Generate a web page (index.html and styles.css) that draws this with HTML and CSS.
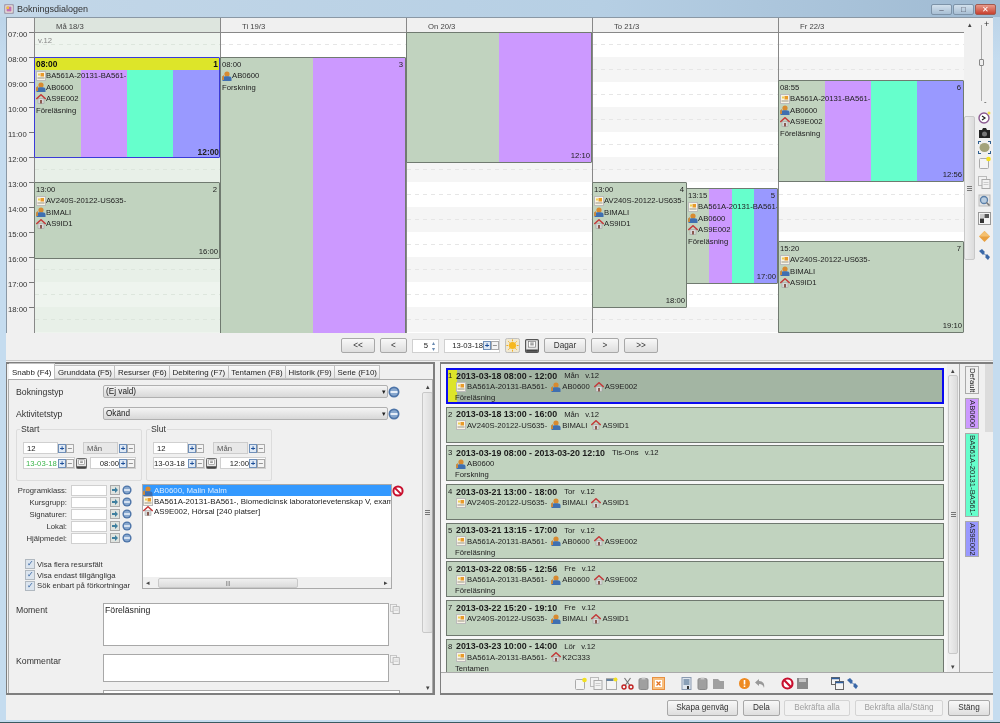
FILE: index.html
```html
<!DOCTYPE html>
<html lang="sv">
<head>
  <meta charset="UTF-8">
  <title>Bokningsdialogen</title>
  <link rel="stylesheet" href="styles.css">
</head>
<body>
<svg class="defs" width="0" height="0">
  <symbol id="i-course" viewBox="0 0 10 10"><rect x=".5" y=".5" width="9" height="9" fill="#f7f3e6" stroke="#bbb"/><rect x="1.5" y="6" width="7" height="2" fill="#c9c4b4"/><rect x="4.5" y="2" width="3.5" height="3.5" fill="#e89a2a"/><rect x="2" y="2.5" width="2" height="2" fill="#f0d050"/></symbol>
  <symbol id="i-person" viewBox="0 0 10 10"><circle cx="5" cy="3" r="2.6" fill="#d88a30"/><path d="M.5 10V7.500C.5 6 2 5.200 3.500 5.200h3C8.200 5.200 9.500 6 9.500 7.500V10z" fill="#3f6fb0"/><path d="M0 5.500 2 4v5H0z" fill="#c98a40"/></symbol>
  <symbol id="i-house" viewBox="0 0 10 10"><rect x="2" y="4.500" width="6" height="5" fill="#d8d8d8" stroke="#999" stroke-width=".5"/><path d="M.3 5 5 .7 9.700 5" fill="none" stroke="#c4393a" stroke-width="1.400"/><rect x="4" y="6" width="2" height="3.500" fill="#8a5a50"/></symbol>
  <symbol id="i-round" viewBox="0 0 12 12"><circle cx="6" cy="6" r="5.500" fill="#4d74a8"/><circle cx="6" cy="6" r="3.800" fill="#88a8cf"/><path d="M2.500 5h7v2h-7z" fill="#e6eef8"/></symbol>
  <symbol id="i-pick" viewBox="0 0 10 10"><rect x=".5" y=".5" width="9" height="9" fill="#dfe3df" stroke="#aaa"/><path d="M2 4h3V2l3 3-3 3V6H2z" fill="#3f7f9f"/></symbol>
  <symbol id="i-no" viewBox="0 0 12 12"><circle cx="6" cy="6" r="4.600" fill="#fff" stroke="#c8102e" stroke-width="2"/><path d="M2.600 2.600l6.800 6.800" stroke="#c8102e" stroke-width="2"/></symbol>
  <symbol id="i-cal" viewBox="0 0 12 12"><rect x=".5" y=".5" width="11" height="11" rx="1" fill="#e8e8e8" stroke="#555"/><rect x="3" y="2" width="6" height="5" fill="#fff" stroke="#777" stroke-width=".6"/><path d="M1 9h10v2H1z" fill="#444"/><path d="M4.500 3.500h3M4.500 5h3" stroke="#555" stroke-width=".7"/></symbol>
  <symbol id="i-sun" viewBox="0 0 16 16"><rect x=".5" y=".5" width="15" height="15" rx="2" fill="#f0e8d0" stroke="#bbb"/><circle cx="8" cy="8" r="3.800" fill="#f6b820"/><path d="M8 1.500v2M8 12.500v2M1.500 8h2M12.500 8h2M3.500 3.500l1.400 1.400M11 11l1.400 1.400M3.500 12.500 5 11M11 5l1.400-1.400" stroke="#f0a818"/></symbol>
  <symbol id="i-clock" viewBox="0 0 13 13"><circle cx="6" cy="7" r="5" fill="#fff" stroke="#8a5a90" stroke-width="1.400"/><path d="M4 5l3 2-3 2" fill="none" stroke="#222" stroke-width="1.200"/><circle cx="11" cy="2" r="1.500" fill="#f0e050"/></symbol>
  <symbol id="i-camera" viewBox="0 0 13 13"><path d="M1 4h3l1-2h3l1 2h3v8H1z" fill="#222"/><circle cx="6.500" cy="8" r="2.500" fill="#777"/></symbol>
  <symbol id="i-frame" viewBox="0 0 13 13"><ellipse cx="6.500" cy="6.500" rx="5" ry="4.500" fill="#a3a27a"/><path d="M0 0h3v1H1v2H0zM13 0h-3v1h2v2h1zM0 13h3v-1H1v-2H0zM13 13h-3v-1h2v-2h1z" fill="#2f5f8f"/></symbol>
  <symbol id="i-new" viewBox="0 0 13 13"><rect x="1.500" y="2.500" width="9" height="10" rx="1" fill="#f4f4f4" stroke="#aaa"/><circle cx="10.500" cy="3" r="2.300" fill="#f2e020"/></symbol>
  <symbol id="i-copy" viewBox="0 0 13 13"><rect x=".5" y=".5" width="8" height="9" fill="#f2f2f2" stroke="#bbb"/><rect x="4" y="3.500" width="8" height="9" fill="#f2f2f2" stroke="#aaa"/><path d="M5.500 6.500h5M5.500 8.500h5" stroke="#ccc"/></symbol>
  <symbol id="i-search" viewBox="0 0 13 13"><rect x="1" y="1" width="11" height="11" fill="#e4e4e4" stroke="#bbb"/><circle cx="6" cy="6" r="3.500" fill="#b8cce0" stroke="#5a7fa8" stroke-width="1.300"/><path d="M8.500 8.500l3 3" stroke="#777" stroke-width="1.500"/></symbol>
  <symbol id="i-squares" viewBox="0 0 13 13"><rect x=".5" y=".5" width="12" height="12" fill="#f4f4f4" stroke="#999"/><rect x="2" y="6.500" width="4" height="4.500" fill="#333"/><rect x="6.500" y="2" width="4.500" height="4" fill="#555"/><rect x="2" y="2" width="4" height="4" fill="#ccc"/></symbol>
  <symbol id="i-diamond" viewBox="0 0 13 13"><path d="M6.500 1 12 6.500 6.500 12 1 6.500z" fill="#e8a040"/><path d="M6.500 1 12 6.500H1z" fill="#f4c070"/></symbol>
  <symbol id="i-links" viewBox="0 0 13 13"><path d="M1 3l3-2 3 3-1 1 2 2 1-1 3 3-2 3-3-3 1-1-2-2-1 1z" fill="#3a68a8"/></symbol>
  <symbol id="i-note" viewBox="0 0 13 13"><rect x="1.500" y="1.500" width="10" height="11" fill="#f4f4f4" stroke="#aaa"/><path d="M1.500 3h7" stroke="#34587f" stroke-width="1.500"/><circle cx="10.500" cy="2.500" r="2" fill="#f2e020"/></symbol>
  <symbol id="i-cut" viewBox="0 0 13 13"><path d="M3.500 1l5 7M9.500 1l-5 7" stroke="#777" stroke-width="1.200"/><circle cx="3" cy="10" r="2" fill="none" stroke="#c02020" stroke-width="1.400"/><circle cx="10" cy="10" r="2" fill="none" stroke="#c02020" stroke-width="1.400"/></symbol>
  <symbol id="i-clip" viewBox="0 0 13 13"><rect x="2" y="1.500" width="9" height="11" rx="1.500" fill="#a0a0a0" stroke="#8a8a8a"/><rect x="4.500" y=".5" width="4" height="2" fill="#c8c8c8"/></symbol>
  <symbol id="i-del" viewBox="0 0 13 13"><rect x=".5" y=".5" width="12" height="12" fill="#f8c080" stroke="#e89040"/><rect x="3" y="3" width="7" height="7" fill="#fff"/><path d="M4.500 4.500l4 4M8.500 4.500l-4 4" stroke="#e07020" stroke-width="1.300"/></symbol>
  <symbol id="i-list" viewBox="0 0 13 13"><rect x="2" y=".5" width="9" height="12" fill="#dfe6ee" stroke="#8a9ab0"/><path d="M3.500 3h6M3.500 5h6M3.500 7h6" stroke="#34587f"/><path d="M7 9h2v3H7z" fill="#333"/></symbol>
  <symbol id="i-folder" viewBox="0 0 13 13"><path d="M1 2h5l2 2h4v8H1z" fill="#a0a0a0"/></symbol>
  <symbol id="i-warn" viewBox="0 0 13 13"><circle cx="6.500" cy="6.500" r="5.500" fill="#ee8a20"/><path d="M5.700 3h1.600v4.500H5.700zM5.700 8.500h1.600V10H5.700z" fill="#fff"/></symbol>
  <symbol id="i-undo" viewBox="0 0 13 13"><path d="M5 2 1 5.500 5 9V7c3 0 4 1 5 4 1-4-1-7-5-7z" fill="#999"/></symbol>
  <symbol id="i-save" viewBox="0 0 13 13"><rect x="1" y="1" width="11" height="11" fill="#8a8a8a"/><rect x="3" y="1.500" width="7" height="3.500" fill="#c8c8c8"/></symbol>
  <symbol id="i-windows" viewBox="0 0 13 13"><rect x=".5" y=".5" width="8" height="7" fill="#f4f4f4" stroke="#666"/><path d="M.5 1.500h8" stroke="#2f5f9f" stroke-width="1.500"/><rect x="4.500" y="4.500" width="8" height="8" fill="#f4f4f4" stroke="#666"/><path d="M4.500 5.500h8" stroke="#2f5f9f" stroke-width="1.500"/></symbol>
  <symbol id="i-app" viewBox="0 0 12 12"><rect x="1" y="1" width="10" height="10" fill="#f0ece0" stroke="#8a7a90"/><rect x="3" y="3" width="6" height="6" fill="#c070b0"/><rect x="3" y="3" width="3" height="3" fill="#f0c040"/></symbol>
</svg>

<div class="window">
  <div class="titlebar">
    <svg class="ico app-ico"><use href="#i-app"/></svg>
    <span class="title">Bokningsdialogen</span>
    <div class="winbuttons">
      <span class="winbtn">&#8211;</span>
      <span class="winbtn">&#9633;</span>
      <span class="winbtn close">&#10005;</span>
    </div>
  </div>

  <div class="client">
    <section class="calendar">
      <div class="gutter">
        <div class="hour">07:00</div>
        <div class="hour">08:00</div>
        <div class="hour">09:00</div>
        <div class="hour">10:00</div>
        <div class="hour">11:00</div>
        <div class="hour">12:00</div>
        <div class="hour">13:00</div>
        <div class="hour">14:00</div>
        <div class="hour">15:00</div>
        <div class="hour">16:00</div>
        <div class="hour">17:00</div>
        <div class="hour">18:00</div>
      </div>

      <div class="day today">
        <div class="day-head">Må 18/3</div>
        <div class="day-body">
          <span class="week-no">v.12</span>
          <div class="event strip4 selected ev-mon1">
            <div class="ev-head"><span>08:00</span><span>1</span></div>
            <div class="ev-row"><svg class="ico"><use href="#i-course"/></svg>BA561A-20131-BA561-</div>
            <div class="ev-row"><svg class="ico"><use href="#i-person"/></svg>AB0600</div>
            <div class="ev-row"><svg class="ico"><use href="#i-house"/></svg>AS9E002</div>
            <div class="ev-row">Föreläsning</div>
            <div class="ev-end">12:00</div>
          </div>
          <div class="event ev-mon2">
            <div class="ev-head"><span>13:00</span><span>2</span></div>
            <div class="ev-row"><svg class="ico"><use href="#i-course"/></svg>AV240S-20122-US635-</div>
            <div class="ev-row"><svg class="ico"><use href="#i-person"/></svg>BIMALI</div>
            <div class="ev-row"><svg class="ico"><use href="#i-house"/></svg>AS9ID1</div>
            <div class="ev-end">16:00</div>
          </div>
        </div>
      </div>

      <div class="day">
        <div class="day-head">Ti 19/3</div>
        <div class="day-body">
          <div class="event strip2 ev-tue">
            <div class="ev-head"><span>08:00</span><span>3</span></div>
            <div class="ev-row"><svg class="ico"><use href="#i-person"/></svg>AB0600</div>
            <div class="ev-row">Forskning</div>
          </div>
        </div>
      </div>

      <div class="day">
        <div class="day-head">On 20/3</div>
        <div class="day-body">
          <div class="event strip2 ev-wed">
            <div class="ev-end">12:10</div>
          </div>
        </div>
      </div>

      <div class="day">
        <div class="day-head">To 21/3</div>
        <div class="day-body">
          <div class="event ev-thu1">
            <div class="ev-head"><span>13:00</span><span>4</span></div>
            <div class="ev-row"><svg class="ico"><use href="#i-course"/></svg>AV240S-20122-US635-</div>
            <div class="ev-row"><svg class="ico"><use href="#i-person"/></svg>BIMALI</div>
            <div class="ev-row"><svg class="ico"><use href="#i-house"/></svg>AS9ID1</div>
            <div class="ev-end">18:00</div>
          </div>
          <div class="event strip4 ev-thu2">
            <div class="ev-head"><span>13:15</span><span>5</span></div>
            <div class="ev-row"><svg class="ico"><use href="#i-course"/></svg>BA561A-20131-BA561-</div>
            <div class="ev-row"><svg class="ico"><use href="#i-person"/></svg>AB0600</div>
            <div class="ev-row"><svg class="ico"><use href="#i-house"/></svg>AS9E002</div>
            <div class="ev-row">Föreläsning</div>
            <div class="ev-end">17:00</div>
          </div>
        </div>
      </div>

      <div class="day">
        <div class="day-head">Fr 22/3</div>
        <div class="day-body">
          <div class="event strip4 ev-fri1">
            <div class="ev-head"><span>08:55</span><span>6</span></div>
            <div class="ev-row"><svg class="ico"><use href="#i-course"/></svg>BA561A-20131-BA561-</div>
            <div class="ev-row"><svg class="ico"><use href="#i-person"/></svg>AB0600</div>
            <div class="ev-row"><svg class="ico"><use href="#i-house"/></svg>AS9E002</div>
            <div class="ev-row">Föreläsning</div>
            <div class="ev-end">12:56</div>
          </div>
          <div class="event ev-fri2">
            <div class="ev-head"><span>15:20</span><span>7</span></div>
            <div class="ev-row"><svg class="ico"><use href="#i-course"/></svg>AV240S-20122-US635-</div>
            <div class="ev-row"><svg class="ico"><use href="#i-person"/></svg>BIMALI</div>
            <div class="ev-row"><svg class="ico"><use href="#i-house"/></svg>AS9ID1</div>
            <div class="ev-end">19:10</div>
          </div>
        </div>
      </div>

      <div class="vscroll cal-scroll">
        <span class="arrow">&#9652;</span>
        <div class="thumb"><span class="grip"></span></div>
      </div>

      <div class="tools">
        <div class="slider">
          <span class="slider-plus">+</span>
          <span class="slider-knob"></span>
          <span class="slider-minus">-</span>
        </div>
        <div class="tool-group">
          <svg class="tool"><use href="#i-clock"/></svg>
          <svg class="tool"><use href="#i-camera"/></svg>
          <svg class="tool"><use href="#i-frame"/></svg>
          <svg class="tool"><use href="#i-new"/></svg>
        </div>
        <div class="tool-group wide">
          <svg class="tool"><use href="#i-copy"/></svg>
          <svg class="tool"><use href="#i-search"/></svg>
          <svg class="tool"><use href="#i-squares"/></svg>
          <svg class="tool"><use href="#i-diamond"/></svg>
          <svg class="tool"><use href="#i-links"/></svg>
        </div>
      </div>
    </section>

    <nav class="navbar">
      <button class="btn w-34">&lt;&lt;</button>
      <button class="btn w-27">&lt;</button>
      <span class="field spin"><span>5</span><span class="spin-arrows"><i>&#9652;</i><i>&#9662;</i></span></span>
      <span class="field nav-date"><span class="grow right">13-03-18</span><span class="pm"><i class="plus">+</i><i>&#8722;</i></span></span>
      <svg class="nav-ico"><use href="#i-sun"/></svg>
      <svg class="nav-cal"><use href="#i-cal"/></svg>
      <button class="btn w-42">Dagar</button>
      <button class="btn w-28">&gt;</button>
      <button class="btn w-34">&gt;&gt;</button>
    </nav>

    <div class="lower">
      <section class="left-pane">
        <div class="tabs">
          <span class="tab active">Snabb (F4)</span>
          <span class="tab">Grunddata (F5)</span>
          <span class="tab">Resurser (F6)</span>
          <span class="tab">Debitering (F7)</span>
          <span class="tab">Tentamen (F8)</span>
          <span class="tab">Historik (F9)</span>
          <span class="tab">Serie (F10)</span>
        </div>
        <div class="tab-body">
          <div class="form">
            <div class="form-row">
              <label class="form-label">Bokningstyp</label>
              <span class="select">(Ej vald)<i>&#9662;</i></span>
              <svg class="ico-12"><use href="#i-round"/></svg>
            </div>
            <div class="form-row">
              <label class="form-label">Aktivitetstyp</label>
              <span class="select">Okänd<i>&#9662;</i></span>
              <svg class="ico-12"><use href="#i-round"/></svg>
            </div>

            <div class="periods">
              <fieldset class="period">
                <legend>Start</legend>
                <div class="period-row">
                  <span class="field w-34f">12</span>
                  <span class="pm"><i class="plus">+</i><i>&#8722;</i></span>
                  <span class="field off">Mån</span>
                  <span class="pm"><i class="plus">+</i><i>&#8722;</i></span>
                </div>
                <div class="period-row">
                  <span class="field date-f"><span class="grow green">13-03-18</span><span class="pm"><i class="plus">+</i><i>&#8722;</i></span></span>
                  <svg class="cal-ico"><use href="#i-cal"/></svg>
                  <span class="field time-f"><span class="grow right">08:00</span><span class="pm"><i class="plus">+</i><i>&#8722;</i></span></span>
                </div>
              </fieldset>
              <fieldset class="period">
                <legend>Slut</legend>
                <div class="period-row">
                  <span class="field w-34f">12</span>
                  <span class="pm"><i class="plus">+</i><i>&#8722;</i></span>
                  <span class="field off">Mån</span>
                  <span class="pm"><i class="plus">+</i><i>&#8722;</i></span>
                </div>
                <div class="period-row">
                  <span class="field date-f"><span class="grow">13-03-18</span><span class="pm"><i class="plus">+</i><i>&#8722;</i></span></span>
                  <svg class="cal-ico"><use href="#i-cal"/></svg>
                  <span class="field time-f"><span class="grow right">12:00</span><span class="pm"><i class="plus">+</i><i>&#8722;</i></span></span>
                </div>
              </fieldset>
            </div>

            <div class="resources">
              <div class="res-left">
                <div class="res-row"><label>Programklass:</label><span class="field res-input"></span><svg class="ico-10"><use href="#i-pick"/></svg><svg class="ico-10"><use href="#i-round"/></svg></div>
                <div class="res-row"><label>Kursgrupp:</label><span class="field res-input"></span><svg class="ico-10"><use href="#i-pick"/></svg><svg class="ico-10"><use href="#i-round"/></svg></div>
                <div class="res-row"><label>Signaturer:</label><span class="field res-input"></span><svg class="ico-10"><use href="#i-pick"/></svg><svg class="ico-10"><use href="#i-round"/></svg></div>
                <div class="res-row"><label>Lokal:</label><span class="field res-input"></span><svg class="ico-10"><use href="#i-pick"/></svg><svg class="ico-10"><use href="#i-round"/></svg></div>
                <div class="res-row"><label>Hjälpmedel:</label><span class="field res-input"></span><svg class="ico-10"><use href="#i-pick"/></svg><svg class="ico-10"><use href="#i-round"/></svg></div>
                <div class="checks">
                  <div class="check"><span class="box">&#10003;</span>Visa flera resursfält</div>
                  <div class="check"><span class="box">&#10003;</span>Visa endast tillgängliga</div>
                  <div class="check"><span class="box">&#10003;</span>Sök enbart på förkortningar</div>
                </div>
              </div>
              <div class="res-list">
                <div class="res-items">
                  <div class="res-item sel"><svg class="ico"><use href="#i-person"/></svg>AB0600, Malin Malm</div>
                  <div class="res-item"><svg class="ico"><use href="#i-course"/></svg>BA561A-20131-BA561-, Biomedicinsk laboratorievetenskap V, examen</div>
                  <div class="res-item"><svg class="ico"><use href="#i-house"/></svg>AS9E002, Hörsal [240 platser]</div>
                </div>
                <div class="hscroll"><span class="arrow">&#9666;</span><span class="hthumb">|||</span><span class="arrow end">&#9656;</span></div>
              </div>
              <svg class="ico-12 no-ico"><use href="#i-no"/></svg>
            </div>

            <div class="form-row text-row moment-row">
              <label class="form-label">Moment</label>
              <div class="textarea moment">Föreläsning</div>
              <svg class="ico-10 doc"><use href="#i-copy"/></svg>
            </div>
            <div class="form-row text-row comment-row">
              <label class="form-label">Kommentar</label>
              <div class="textarea comment"></div>
              <svg class="ico-10 doc"><use href="#i-copy"/></svg>
            </div>
            <div class="form-row text-row last-row">
              <span class="form-label"></span>
              <div class="textarea last"></div>
            </div>
          </div>
          <div class="vscroll form-scroll">
            <span class="arrow">&#9652;</span>
            <div class="thumb"><span class="grip"></span></div>
            <span class="arrow end">&#9662;</span>
          </div>
        </div>
      </section>

      <section class="right-pane">
        <div class="booking-area">
          <div class="bookings">
            <div class="booking selected">
              <div class="b-line"><span class="b-no">1</span><b>2013-03-18 08:00 - 12:00</b><span class="b-day">Mån</span><span>v.12</span></div>
              <div class="b-line sub"><svg class="ico"><use href="#i-course"/></svg>BA561A-20131-BA561-<svg class="ico"><use href="#i-person"/></svg>AB0600<svg class="ico"><use href="#i-house"/></svg>AS9E002</div>
              <div class="b-line note">Föreläsning</div>
            </div>
            <div class="booking">
              <div class="b-line"><span class="b-no">2</span><b>2013-03-18 13:00 - 16:00</b><span class="b-day">Mån</span><span>v.12</span></div>
              <div class="b-line sub"><svg class="ico"><use href="#i-course"/></svg>AV240S-20122-US635-<svg class="ico"><use href="#i-person"/></svg>BIMALI<svg class="ico"><use href="#i-house"/></svg>AS9ID1</div>
            </div>
            <div class="booking">
              <div class="b-line"><span class="b-no">3</span><b>2013-03-19 08:00 - 2013-03-20 12:10</b><span class="b-day">Tis-Ons</span><span>v.12</span></div>
              <div class="b-line sub"><svg class="ico"><use href="#i-person"/></svg>AB0600</div>
              <div class="b-line note">Forskning</div>
            </div>
            <div class="booking">
              <div class="b-line"><span class="b-no">4</span><b>2013-03-21 13:00 - 18:00</b><span class="b-day">Tor</span><span>v.12</span></div>
              <div class="b-line sub"><svg class="ico"><use href="#i-course"/></svg>AV240S-20122-US635-<svg class="ico"><use href="#i-person"/></svg>BIMALI<svg class="ico"><use href="#i-house"/></svg>AS9ID1</div>
            </div>
            <div class="booking">
              <div class="b-line"><span class="b-no">5</span><b>2013-03-21 13:15 - 17:00</b><span class="b-day">Tor</span><span>v.12</span></div>
              <div class="b-line sub"><svg class="ico"><use href="#i-course"/></svg>BA561A-20131-BA561-<svg class="ico"><use href="#i-person"/></svg>AB0600<svg class="ico"><use href="#i-house"/></svg>AS9E002</div>
              <div class="b-line note">Föreläsning</div>
            </div>
            <div class="booking">
              <div class="b-line"><span class="b-no">6</span><b>2013-03-22 08:55 - 12:56</b><span class="b-day">Fre</span><span>v.12</span></div>
              <div class="b-line sub"><svg class="ico"><use href="#i-course"/></svg>BA561A-20131-BA561-<svg class="ico"><use href="#i-person"/></svg>AB0600<svg class="ico"><use href="#i-house"/></svg>AS9E002</div>
              <div class="b-line note">Föreläsning</div>
            </div>
            <div class="booking">
              <div class="b-line"><span class="b-no">7</span><b>2013-03-22 15:20 - 19:10</b><span class="b-day">Fre</span><span>v.12</span></div>
              <div class="b-line sub"><svg class="ico"><use href="#i-course"/></svg>AV240S-20122-US635-<svg class="ico"><use href="#i-person"/></svg>BIMALI<svg class="ico"><use href="#i-house"/></svg>AS9ID1</div>
            </div>
            <div class="booking">
              <div class="b-line"><span class="b-no">8</span><b>2013-03-23 10:00 - 14:00</b><span class="b-day">Lör</span><span>v.12</span></div>
              <div class="b-line sub"><svg class="ico"><use href="#i-course"/></svg>BA561A-20131-BA561-<svg class="ico"><use href="#i-house"/></svg>K2C333</div>
              <div class="b-line note">Tentamen</div>
            </div>
          </div>
          <div class="vscroll list-scroll">
            <span class="arrow">&#9652;</span>
            <div class="thumb"><span class="grip"></span></div>
            <span class="arrow end">&#9662;</span>
          </div>
          <aside class="legend-side">
            <div class="legend-tabs">
              <span class="ltab">Default</span>
              <span class="ltab purple">AB0600</span>
              <span class="ltab teal">BA561A-20131-BA561-</span>
              <span class="ltab blue">AS9E002</span>
            </div>
            <span class="legend-scroll"></span>
          </aside>
        </div>
        <div class="toolbar">
          <div class="tb-group">
            <svg class="tb"><use href="#i-new"/></svg>
            <svg class="tb"><use href="#i-copy"/></svg>
            <svg class="tb"><use href="#i-note"/></svg>
            <svg class="tb"><use href="#i-cut"/></svg>
            <svg class="tb"><use href="#i-clip"/></svg>
            <svg class="tb"><use href="#i-del"/></svg>
          </div>
          <div class="tb-group">
            <svg class="tb"><use href="#i-list"/></svg>
            <svg class="tb"><use href="#i-clip"/></svg>
            <svg class="tb"><use href="#i-folder"/></svg>
          </div>
          <div class="tb-group">
            <svg class="tb"><use href="#i-warn"/></svg>
            <svg class="tb"><use href="#i-undo"/></svg>
          </div>
          <div class="tb-group">
            <svg class="tb"><use href="#i-no"/></svg>
            <svg class="tb"><use href="#i-save"/></svg>
          </div>
          <div class="tb-group far">
            <svg class="tb"><use href="#i-windows"/></svg>
            <svg class="tb"><use href="#i-links"/></svg>
          </div>
        </div>
      </section>
    </div>

    <footer class="footer">
      <button class="btn foot w-71">Skapa genväg</button>
      <button class="btn foot w-37">Dela</button>
      <button class="btn foot w-66 disabled">Bekräfta alla</button>
      <button class="btn foot w-88 disabled">Bekräfta alla/Stäng</button>
      <button class="btn foot w-42">Stäng</button>
    </footer>
  </div>
</div>
</body>
</html>
```

FILE: styles.css
```css
* {
  box-sizing: border-box;
}

body {
  margin: 0;
  font-family: "Liberation Sans", Arial, sans-serif;
  font-size: 7.7px;
  color: #222;
  background: #c4dbee;
}

.defs {
  position: absolute;
}

.window {
  width: 1000px;
  height: 723px;
  display: flex;
  flex-direction: column;
  overflow: hidden;
  filter: blur(0.4px);
  background: linear-gradient(#b9d1e6, #c5dcef 60px);
  border-bottom: 1px solid #3a5a60;
}

/* title bar */
.titlebar {
  height: 17px;
  flex: none;
  display: flex;
  align-items: center;
  padding: 0 4px;
  background: linear-gradient(90deg, #c3d7e8, #b6cfe4 60%, #9fbad2);
}

.app-ico {
  margin-right: 3px;
}

.title {
  font-size: 9px;
  color: #333;
}

.winbuttons {
  margin-left: auto;
  display: flex;
  gap: 1px;
  align-self: flex-start;
  margin-top: 4px;
}

.winbtn {
  width: 21px;
  height: 11px;
  line-height: 10px;
  text-align: center;
  font-size: 8px;
  color: #445;
  border: 1px solid #7d93a8;
  border-radius: 2px;
  background: linear-gradient(#d2e0ec, #a8bfd4);
}

.winbtn.close {
  color: #fff;
  background: linear-gradient(#e89a8a, #c8402f);
  border-color: #a05a50;
}

.client {
  flex: 1;
  margin: 0 7px 2px 6px;
  display: flex;
  flex-direction: column;
  min-height: 0;
  background: #f0f0f0;
}

/* calendar */
.calendar {
  height: 316px;
  flex: none;
  display: flex;
  border-top: 1px solid #8a98a5;
  overflow: hidden;
}

.gutter {
  width: 28px;
  flex: none;
  padding-top: 14px;
  border-left: 1px solid #8a98a5;
  background: #f0f0f0;
}

.hour {
  height: 25px;
  display: flex;
  justify-content: space-between;
  padding-left: 1px;
  line-height: 6px;
  color: #333;
}

.hour::after {
  content: "";
  width: 5px;
  height: 1px;
  background: #777;
}

.day {
  width: 186px;
  flex: none;
  display: flex;
  flex-direction: column;
  border-left: 1px solid #888;
}

.day-head {
  height: 15px;
  flex: none;
  padding: 4px 0 0 21px;
  color: #444;
  background: #f0f0f0;
  border-bottom: 1px solid #888;
}

.today .day-head {
  background: #dde5de;
}

.day-body {
  flex: 1;
  position: relative;
  background: linear-gradient(#fff 50%, #f5f5f5 50%) 0 -1px / 100% 50px;
}

/* half hour dashes */
.day-body::before {
  content: "";
  position: absolute;
  top: 0;
  right: 0;
  bottom: 0;
  left: 0;
  background: repeating-linear-gradient(90deg, #e6e6e6 0 4px, transparent 4px 8px);
  -webkit-mask-image: repeating-linear-gradient(transparent 0 11px, #000 11px 12px, transparent 12px 25px);
  mask-image: repeating-linear-gradient(transparent 0 11px, #000 11px 12px, transparent 12px 25px);
}

.today .day-body {
  background-image: linear-gradient(#eef4ee 50%, #e8f0e8 50%);
}

.today .day-body::before {
  background: repeating-linear-gradient(90deg, #dde6dd 0 4px, transparent 4px 8px);
}

.week-no {
  display: block;
  position: relative;
  padding: 3px 0 0 3px;
  color: #888;
}

/* events sit on the time grid */
.event {
  position: absolute;
  display: flex;
  flex-direction: column;
  left: -1px;
  right: 0;
  overflow: hidden;
  background: #c1d3bf;
  border: 1px solid #707a70;
  border-radius: 1px;
}

.strip4 {
  background: linear-gradient(90deg, #c1d3bf 25%, #cc99ff 25% 50%, #66ffcc 50% 75%, #9999ff 75%);
}

.strip2 {
  background: linear-gradient(90deg, #c1d3bf 50%, #cc99ff 50%);
}

.event.selected {
  border-color: #3a3ad8;
}

.ev-mon1 { top: 24px; height: 101px; }
.ev-mon2 { top: 149px; height: 77px; }
.ev-tue { top: 24px; height: 290px; }
.ev-wed { top: -1px; height: 131px; }
.ev-thu1 { top: 149px; height: 126px; right: auto; width: 95px; }
.ev-thu2 { top: 155px; height: 96px; left: 93px; }
.ev-fri1 { top: 47px; height: 102px; }
.ev-fri2 { top: 208px; height: 92px; }

.ev-head {
  height: 12px;
  flex: none;
  display: flex;
  justify-content: space-between;
  align-items: center;
  padding: 0 2px 0 1px;
}

.selected .ev-head {
  background: #dde529;
  font-weight: bold;
  font-size: 8.4px;
  color: #111;
  padding-right: 1px;
}

.ev-row {
  height: 11.6px;
  flex: none;
  display: flex;
  align-items: center;
  white-space: nowrap;
  padding-left: 1px;
}

.ico {
  width: 10px;
  height: 10px;
  flex: none;
}

.ev-end {
  margin-top: auto;
  padding: 0 1px 1px 0;
  text-align: right;
  line-height: 10px;
}

.selected .ev-end {
  font-weight: bold;
  font-size: 8.4px;
  padding: 0;
}

/* scrollbars */
.vscroll {
  flex: none;
  display: flex;
  flex-direction: column;
  align-items: center;
  background: #f0f0f0;
}

.arrow {
  font-size: 7px;
  line-height: 9px;
  color: #444;
  flex: none;
}

.vscroll .arrow.end {
  margin-top: auto;
}

.thumb {
  width: 100%;
  display: flex;
  align-items: center;
  justify-content: center;
  background: linear-gradient(90deg, #eee, #dcdcdc);
  border: 1px solid #c8c8c8;
  border-radius: 2px;
}

.grip {
  width: 5px;
  height: 5px;
  background: repeating-linear-gradient(#777 0 1px, transparent 1px 2px);
}

.cal-scroll {
  width: 11px;
  padding-top: 2px;
}

.cal-scroll .thumb {
  height: 144px;
  margin-top: 87px;
}

/* right tool column */
.tools {
  width: 18px;
  flex: none;
  display: flex;
  flex-direction: column;
  align-items: center;
  background: #f0f0f0;
}

.slider {
  width: 18px;
  height: 91px;
  flex: none;
  display: flex;
  flex-direction: column;
  position: relative;
  background: linear-gradient(#aaa, #aaa) 6px 7px / 1px 76px no-repeat;
}

.slider-plus {
  padding: 2px 0 0 9px;
  font-size: 9px;
  line-height: 9px;
  color: #333;
}

.slider-knob {
  position: absolute;
  top: 41px;
  left: 4px;
  width: 5px;
  height: 7px;
  border: 1px solid #888;
  border-radius: 1px;
  background: #eee;
}

.slider-minus {
  margin-top: auto;
  padding: 0 0 3px 9px;
  line-height: 9px;
  color: #333;
}

.tool-group {
  display: flex;
  flex-direction: column;
  align-items: center;
  gap: 2px;
  padding-left: 1px;
  margin-top: 2px;
}

.tool-group.wide {
  gap: 5px;
  margin-top: 7px;
}

.tool {
  width: 13px;
  height: 13px;
}

/* nav row */
.navbar {
  height: 27px;
  flex: none;
  display: flex;
  align-items: center;
  gap: 5px;
  padding: 0 0 2px 335px;
}

.btn {
  height: 15px;
  padding: 0;
  font-family: inherit;
  font-size: 8.2px;
  color: #333;
  border: 1px solid #a8a8a8;
  border-radius: 2px;
  background: linear-gradient(#f8f8f8, #dedede);
}

.w-27 { width: 27px; }
.w-28 { width: 28px; }
.w-34 { width: 34px; }
.w-37 { width: 37px; }
.w-42 { width: 42px; }
.w-66 { width: 66px; }
.w-71 { width: 71px; }
.w-88 { width: 88px; }

.field {
  height: 12px;
  flex: none;
  display: flex;
  align-items: center;
  padding-left: 3px;
  background: #fff;
  border: 1px solid #d0d0d0;
  white-space: nowrap;
}

.grow {
  flex: 1;
}

.right {
  text-align: right;
}

.green {
  color: #3bb54a;
  padding-left: 2px;
}

.spin {
  width: 27px;
  height: 14px;
  justify-content: flex-end;
  padding: 0;
}

.spin-arrows {
  display: flex;
  flex-direction: column;
  margin-left: 1px;
}

.spin-arrows i {
  font-style: normal;
  width: 9px;
  height: 6px;
  line-height: 6px;
  font-size: 6px;
  text-align: center;
  color: #6a8ab0;
}

.nav-date {
  width: 56px;
  height: 14px;
  padding: 0;
}

.nav-ico {
  width: 15px;
  height: 15px;
  flex: none;
}

.nav-cal {
  width: 14px;
  height: 14px;
  flex: none;
}

/* plus / minus pairs */
.pm {
  flex: none;
  display: flex;
}

.pm i {
  width: 8px;
  height: 9px;
  font-style: normal;
  font-size: 8px;
  font-weight: bold;
  line-height: 7px;
  text-align: center;
  color: #888;
  background: #f4f4f4;
  border: 1px solid #aaa;
}

.pm i.plus {
  color: #1c4f9a;
  background: #dfe9f5;
  border-color: #6f8fb8;
}

/* lower split */
.lower {
  height: 335px;
  flex: none;
  display: flex;
  gap: 5px;
  padding: 1px 0 0;
  border-top: 1px solid #c8c8c8;
}

.left-pane {
  width: 429px;
  flex: none;
  display: flex;
  flex-direction: column;
  border: 1px solid #7f7f7f;
  border-width: 2px 2px 2px 1px;
}

.tabs {
  height: 15px;
  flex: none;
  display: flex;
  padding-left: 2px;
  background: #f0f0f0;
}

.tab {
  height: 14px;
  margin-top: 1px;
  padding: 2px 2.500px 0;
  font-size: 7.900px;
  white-space: nowrap;
  border: 1px solid #c0c0c0;
  border-left: 0;
  background: linear-gradient(#fafafa, #e6e6e6);
}

.tab.active {
  height: 16px;
  margin-top: -1px;
  padding: 4px 3px 0;
  background: #fff;
  border-bottom: 0;
  position: relative;
  z-index: 1;
}

.tab-body {
  flex: 1;
  min-height: 0;
  display: flex;
  overflow: hidden;
  margin-left: 1px;
  border: 1px solid #aaa;
  border-bottom: 0;
  background: #f0f0f0;
}

.form {
  width: 413px;
  flex: none;
  padding: 5px 0 0 7px;
  overflow: hidden;
}

.form-row {
  display: flex;
  align-items: center;
  height: 13px;
  margin-bottom: 9px;
}

.form-label {
  width: 87px;
  flex: none;
  font-size: 8.7px;
  color: #333;
}

.select {
  width: 285px;
  height: 13px;
  flex: none;
  display: flex;
  align-items: center;
  justify-content: space-between;
  padding: 0 1px 0 2px;
  border: 1px solid #b0b0b0;
  border-radius: 2px;
  background: linear-gradient(#f4f4f4, #d8d8d8);
  font-size: 8.2px;
}

.select i {
  font-style: normal;
  font-size: 7px;
  color: #222;
}

.ico-12 {
  width: 12px;
  height: 12px;
  flex: none;
}

.ico-10 {
  width: 10px;
  height: 10px;
  flex: none;
}

/* start and end */
.periods {
  display: flex;
  gap: 4px;
  margin-top: -4px;
}

.period {
  width: 126px;
  height: 56px;
  margin: 0;
  padding: 8px 0 0 6px;
  border: 1px solid #dcdcdc;
  border-radius: 2px;
  display: flex;
  flex-direction: column;
  gap: 3px;
}

.period legend {
  padding: 0 1px;
  margin-left: -3px;
  font-size: 8.7px;
  line-height: 9px;
  color: #333;
}

.period-row {
  height: 12px;
  display: flex;
  align-items: center;
}

.w-34f {
  width: 35px;
}

.off {
  width: 35px;
  margin: 0 1px 0 9px;
  background: #e8e8e8;
  color: #555;
  border-color: #ccc;
}

.date-f {
  width: 52px;
  padding: 0;
}

.cal-ico {
  width: 11px;
  height: 11px;
  flex: none;
  margin: 0 3px 0 1px;
}

.time-f {
  width: 46px;
  padding: 0;
}

/* resource search */
.resources {
  display: flex;
  height: 105px;
  margin-top: 3px;
}

.res-left {
  width: 126px;
  flex: none;
  display: flex;
  flex-direction: column;
}

.res-row {
  height: 12px;
  flex: none;
  display: flex;
  align-items: center;
}

.res-row label {
  width: 52px;
  flex: none;
  text-align: right;
  color: #333;
  padding-right: 1px;
}

.res-input {
  width: 36px;
  height: 11px;
  margin: 0 3px;
}

.res-row .ico-10 + .ico-10 {
  margin-left: 2px;
}

.checks {
  margin-top: 15px;
  padding-left: 9px;
}

.check {
  height: 10.700px;
  display: flex;
  align-items: center;
  white-space: nowrap;
  color: #333;
}

.box {
  width: 10px;
  height: 10px;
  flex: none;
  margin-right: 2px;
  font-size: 8px;
  line-height: 8px;
  text-align: center;
  color: #2f5f9f;
  background: #dbe4ee;
  border: 1px solid #b0b8c0;
}

.res-list {
  width: 250px;
  flex: none;
  display: flex;
  flex-direction: column;
  background: #fff;
  border: 1px solid #aaa;
}

.res-items {
  flex: 1;
  overflow: hidden;
  font-size: 7.900px;
}

.res-item {
  height: 10px;
  display: flex;
  align-items: center;
  white-space: nowrap;
  gap: 1px;
}

.res-item.sel {
  height: 11px;
  background: #3399ff;
  color: #dcecff;
}

.hscroll {
  height: 11px;
  flex: none;
  display: flex;
  align-items: center;
  background: #f0f0f0;
  padding: 0 3px;
}

.hthumb {
  width: 140px;
  height: 10px;
  margin-left: 8px;
  font-size: 6px;
  line-height: 8px;
  text-align: center;
  color: #666;
  border: 1px solid #c8c8c8;
  border-radius: 2px;
  background: linear-gradient(#f0f0f0, #dcdcdc);
}

.hscroll .arrow.end {
  margin-left: auto;
}

.no-ico {
  margin-top: 1px;
}

.text-row {
  align-items: flex-start;
  height: auto;
  margin-bottom: 0;
}

.text-row .form-label {
  padding-top: 2px;
}

.moment-row {
  margin-top: 14px;
}

.comment-row {
  margin-top: 8px;
}

.last-row {
  margin-top: 8px;
}

.textarea {
  width: 286px;
  flex: none;
  padding: 1px;
  font-size: 8.700px;
  background: #fff;
  border: 1px solid #a8a8a8;
}

.moment {
  height: 43px;
}

.comment {
  height: 28px;
}

.last {
  width: 297px;
  height: 20px;
}

.doc {
  margin: 1px 0 0 1px;
}

.form-scroll {
  width: 11px;
  padding: 2px 0 1px;
}

.form-scroll .thumb {
  height: 241px;
  margin-top: 1px;
}

/* booking list */
.right-pane {
  flex: 1;
  min-width: 0;
  display: flex;
  flex-direction: column;
  border: 1px solid #7f7f7f;
  border-width: 2px 0 2px 1px;
}

.booking-area {
  flex: 1;
  min-height: 0;
  display: flex;
  border-bottom: 1px solid #aaa;
}

.bookings {
  width: 506px;
  flex: none;
  display: flex;
  flex-direction: column;
  gap: 2.700px;
  padding: 4px 3px 0 5px;
  overflow: hidden;
  background: #f6f6f6;
}

.booking {
  height: 36px;
  flex: none;
  display: flex;
  flex-direction: column;
  padding: 1px 0 0 1px;
  background: #c1d3bf;
  border: 1px solid #6f786f;
}

.booking.selected {
  background: linear-gradient(90deg, #dde529 9px, #a3b5a3 9px);
  border: 2px solid #0a0af0;
  padding: 0;
}

.b-line {
  height: 11px;
  flex: none;
  display: flex;
  align-items: center;
  white-space: nowrap;
}

.b-line b {
  font-size: 8.900px;
  color: #1c1c1c;
}

.b-no {
  width: 8px;
  flex: none;
}

.b-day {
  margin: 0 6px 0 7px;
}

.sub {
  padding-left: 8px;
}

.sub .ico {
  margin-right: 1px;
}

.sub .ico ~ .ico {
  margin-left: 4px;
}

.note {
  padding-left: 7px;
}

.list-scroll {
  width: 12px;
  padding: 2px 1px 1px;
}

.list-scroll .thumb {
  height: 279px;
}

.legend-side {
  flex: 1;
  display: flex;
  padding: 2px 0 0 5px;
  border-left: 1px solid #aaa;
  background: #f0f0f0;
}

.legend-tabs {
  width: 14px;
  flex: none;
  display: flex;
  flex-direction: column;
  gap: 3.500px;
}

.ltab {
  writing-mode: vertical-rl;
  flex: none;
  padding: 1px 0;
  width: 14px;
  line-height: 12px;
  text-align: center;
  white-space: nowrap;
  border: 1px solid #aaa;
  background: #f0f0f0;
}

.ltab.purple { background: #cc99ff; }
.ltab.teal { background: #66ffcc; }
.ltab.blue { background: #9999ff; }

.legend-scroll {
  width: 8px;
  height: 68px;
  margin: -2px 0 0 6px;
  background: #dcdcdc;
}

.toolbar {
  height: 20px;
  flex: none;
  display: flex;
  align-items: center;
  padding-left: 133px;
  background: #f0f0f0;
}

.tb-group {
  display: flex;
  gap: 2.700px;
  margin-right: 13.500px;
}

.tb-group:first-child {
  margin-right: 15px;
}

.tb-group.far {
  margin-left: 8px;
}

.tb {
  width: 13px;
  height: 13px;
  flex: none;
}

/* bottom buttons */
.footer {
  height: 25px;
  flex: none;
  display: flex;
  justify-content: flex-end;
  align-items: center;
  gap: 5px;
  padding: 0 3px 0 0;
}

.foot {
  height: 16px;
  font-size: 8.200px;
}

.foot.w-37 + .foot {
  margin-left: -1px;
}

.btn.disabled {
  color: #a0a0a0;
  border-color: #d4d4d4;
  background: #f2f2f2;
}
```
